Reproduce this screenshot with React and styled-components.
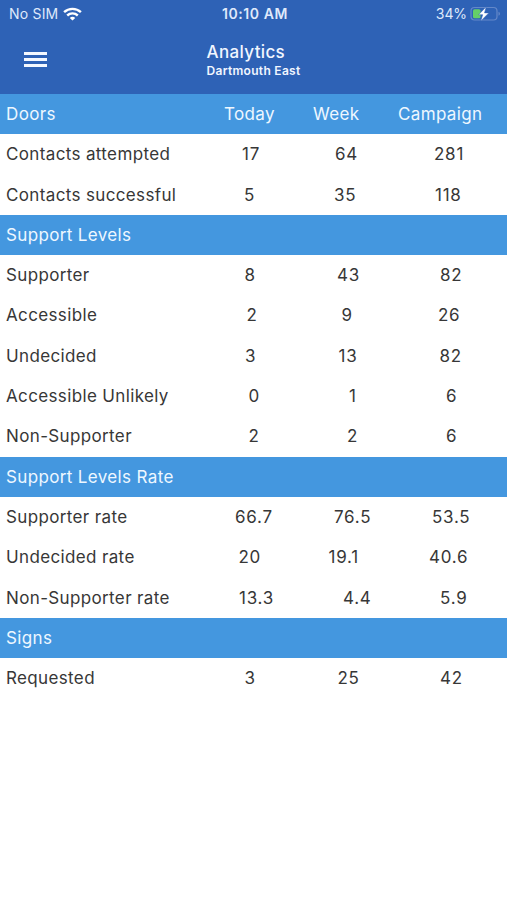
import React from "react";
import styled, { createGlobalStyle } from "styled-components";

const GlobalStyle = createGlobalStyle`
    body {
        margin: 0;
        background: #fff;
        font-family: Inter, "Liberation Sans", sans-serif;
    }
`;

const Screen = styled.div`
    height: 900px;
    overflow: hidden;
    background: #fff;
`;

const Header = styled.header`
    height: 94px;
    background: #2e62b6;
    color: #f1f6ff;
`;

const StatusBar = styled.div`
    display: grid;
    grid-template-columns: 1fr auto 1fr;
    align-items: center;
    height: 27px;
    padding: 0 6px 0 9px;
    font-size: 14px;
    line-height: 27px;
    color: #dfe9fb;
`;

const StatusGroup = styled.div`
    display: flex;
    align-items: center;
    justify-content: ${props => props.$end ? "flex-end" : "flex-start"};
    gap: ${props => props.$end ? "3px" : "5px"};
    letter-spacing: ${props => props.$end ? "-0.1px" : "0.2px"};
`;

const Clock = styled.div`
    font-weight: 600;
    letter-spacing: 0.6px;
`;

const NavBar = styled.div`
    display: flex;
    height: 67px;
`;

const MenuButton = styled.button`
    display: flex;
    flex-direction: column;
    gap: 3.5px;
    width: 206.5px;
    padding: 25px 0 0 24px;
    border: 0;
    background: none;
`;

const MenuBar = styled.span`
    width: 22.5px;
    height: 2.5px;
    background: #f4f8ff;
`;

const Titles = styled.div`
    padding-top: 15px;
`;

const Title = styled.h1`
    margin: 0;
    font-size: 17px;
    font-weight: 500;
    line-height: 20px;
    letter-spacing: 0.35px;
`;

const Subtitle = styled.p`
    margin: 0;
    font-size: 12px;
    font-weight: 600;
    line-height: 18px;
    letter-spacing: 0.3px;
`;

const Row = styled.div`
    display: grid;
    grid-template-columns: ${props => props.$columns};
    height: 40.31px;
    padding-left: 6px;
    font-size: 17px;
    line-height: 40px;
    letter-spacing: 0.36px;
    white-space: nowrap;
    color: ${props => props.$heading ? "#eef7ff" : "#373737"};
    background: ${props => props.$heading ? "#4497df" : "#fff"};
`;

const Label = styled.span`
    overflow: hidden;
`;

const Value = styled.span`
    letter-spacing: ${props => props.$heading ? "0.36px" : "0.75px"};
`;

// starts: where the today / week / campaign values begin
const rows = [
    { label: "Doors", heading: true, values: ["Today", "Week", "Campaign"], starts: [224, 313, 398] },
    { label: "Contacts attempted", values: ["17", "64", "281"], starts: [242, 335, 434] },
    { label: "Contacts successful", values: ["5", "35", "118"], starts: [244, 334, 435] },
    { label: "Support Levels", heading: true },
    { label: "Supporter", values: ["8", "43", "82"], starts: [244.5, 337, 440] },
    { label: "Accessible", values: ["2", "9", "26"], starts: [246.5, 341.5, 438] },
    { label: "Undecided", values: ["3", "13", "82"], starts: [245, 338.5, 439.5] },
    { label: "Accessible Unlikely", values: ["0", "1", "6"], starts: [248.5, 349, 446] },
    { label: "Non-Supporter", values: ["2", "2", "6"], starts: [248.5, 347, 446] },
    { label: "Support Levels Rate", heading: true },
    { label: "Supporter rate", values: ["66.7", "76.5", "53.5"], starts: [235, 334, 432] },
    { label: "Undecided rate", values: ["20", "19.1", "40.6"], starts: [238.5, 328.5, 429] },
    { label: "Non-Supporter rate", values: ["13.3", "4.4", "5.9"], starts: [239, 343, 440] },
    { label: "Signs", heading: true },
    { label: "Requested", values: ["3", "25", "42"], starts: [244.5, 337.5, 440] },
];

const columnsFor = (starts) => {
    if (!starts) return "1fr";
    const [today, week, campaign] = starts;
    return `${today - 6}px ${week - today}px ${campaign - week}px 1fr`;
};

const WifiIcon = () => (
    <svg width="19" height="14" viewBox="0 0 19 14" fill="none" stroke="#fff" strokeWidth="2.4">
        <path d="M1.1 5.2C5.8 .7 13.2 .7 17.9 5.2" />
        <path d="M4.2 8.5C7.2 5.7 11.8 5.7 14.8 8.5" />
        <path d="M9.5 13.5L6.8 10.9C8.3 9.5 10.7 9.5 12.2 10.9Z" fill="#fff" stroke="none" />
    </svg>
);

const BatteryIcon = () => (
    <svg width="31" height="16" viewBox="0 0 31 16">
        <rect x="1" y="1.5" width="26" height="12.5" rx="3.5" fill="none" stroke="#6488c9" strokeWidth="1.2" />
        <path d="M28.5 5.7C30.5 6.5 30.5 9 28.5 9.8Z" fill="#6488c9" />
        <rect x="3" y="3.3" width="7.5" height="9" rx="1.5" fill="#65cf68" />
        <path d="M16.2 .8L8.6 8.7H12.7L10.8 15L18.8 6.9H14.5Z" fill="#fff" stroke="#2e62b6" strokeWidth=".5" />
    </svg>
);

export default function App() {
    return (
        <Screen>
            <GlobalStyle />
            <Header>
                <StatusBar>
                    <StatusGroup>No SIM <WifiIcon /></StatusGroup>
                    <Clock>10:10 AM</Clock>
                    <StatusGroup $end>34% <BatteryIcon /></StatusGroup>
                </StatusBar>
                <NavBar>
                    <MenuButton aria-label="Menu">
                        <MenuBar />
                        <MenuBar />
                        <MenuBar />
                    </MenuButton>
                    <Titles>
                        <Title>Analytics</Title>
                        <Subtitle>Dartmouth East</Subtitle>
                    </Titles>
                </NavBar>
            </Header>
            {rows.map(row => (
                <Row key={row.label} $heading={row.heading} $columns={columnsFor(row.starts)}>
                    <Label>{row.label}</Label>
                    {row.values && row.values.map((value, i) => (
                        <Value key={i} $heading={row.heading}>{value}</Value>
                    ))}
                </Row>
            ))}
        </Screen>
    );
}
